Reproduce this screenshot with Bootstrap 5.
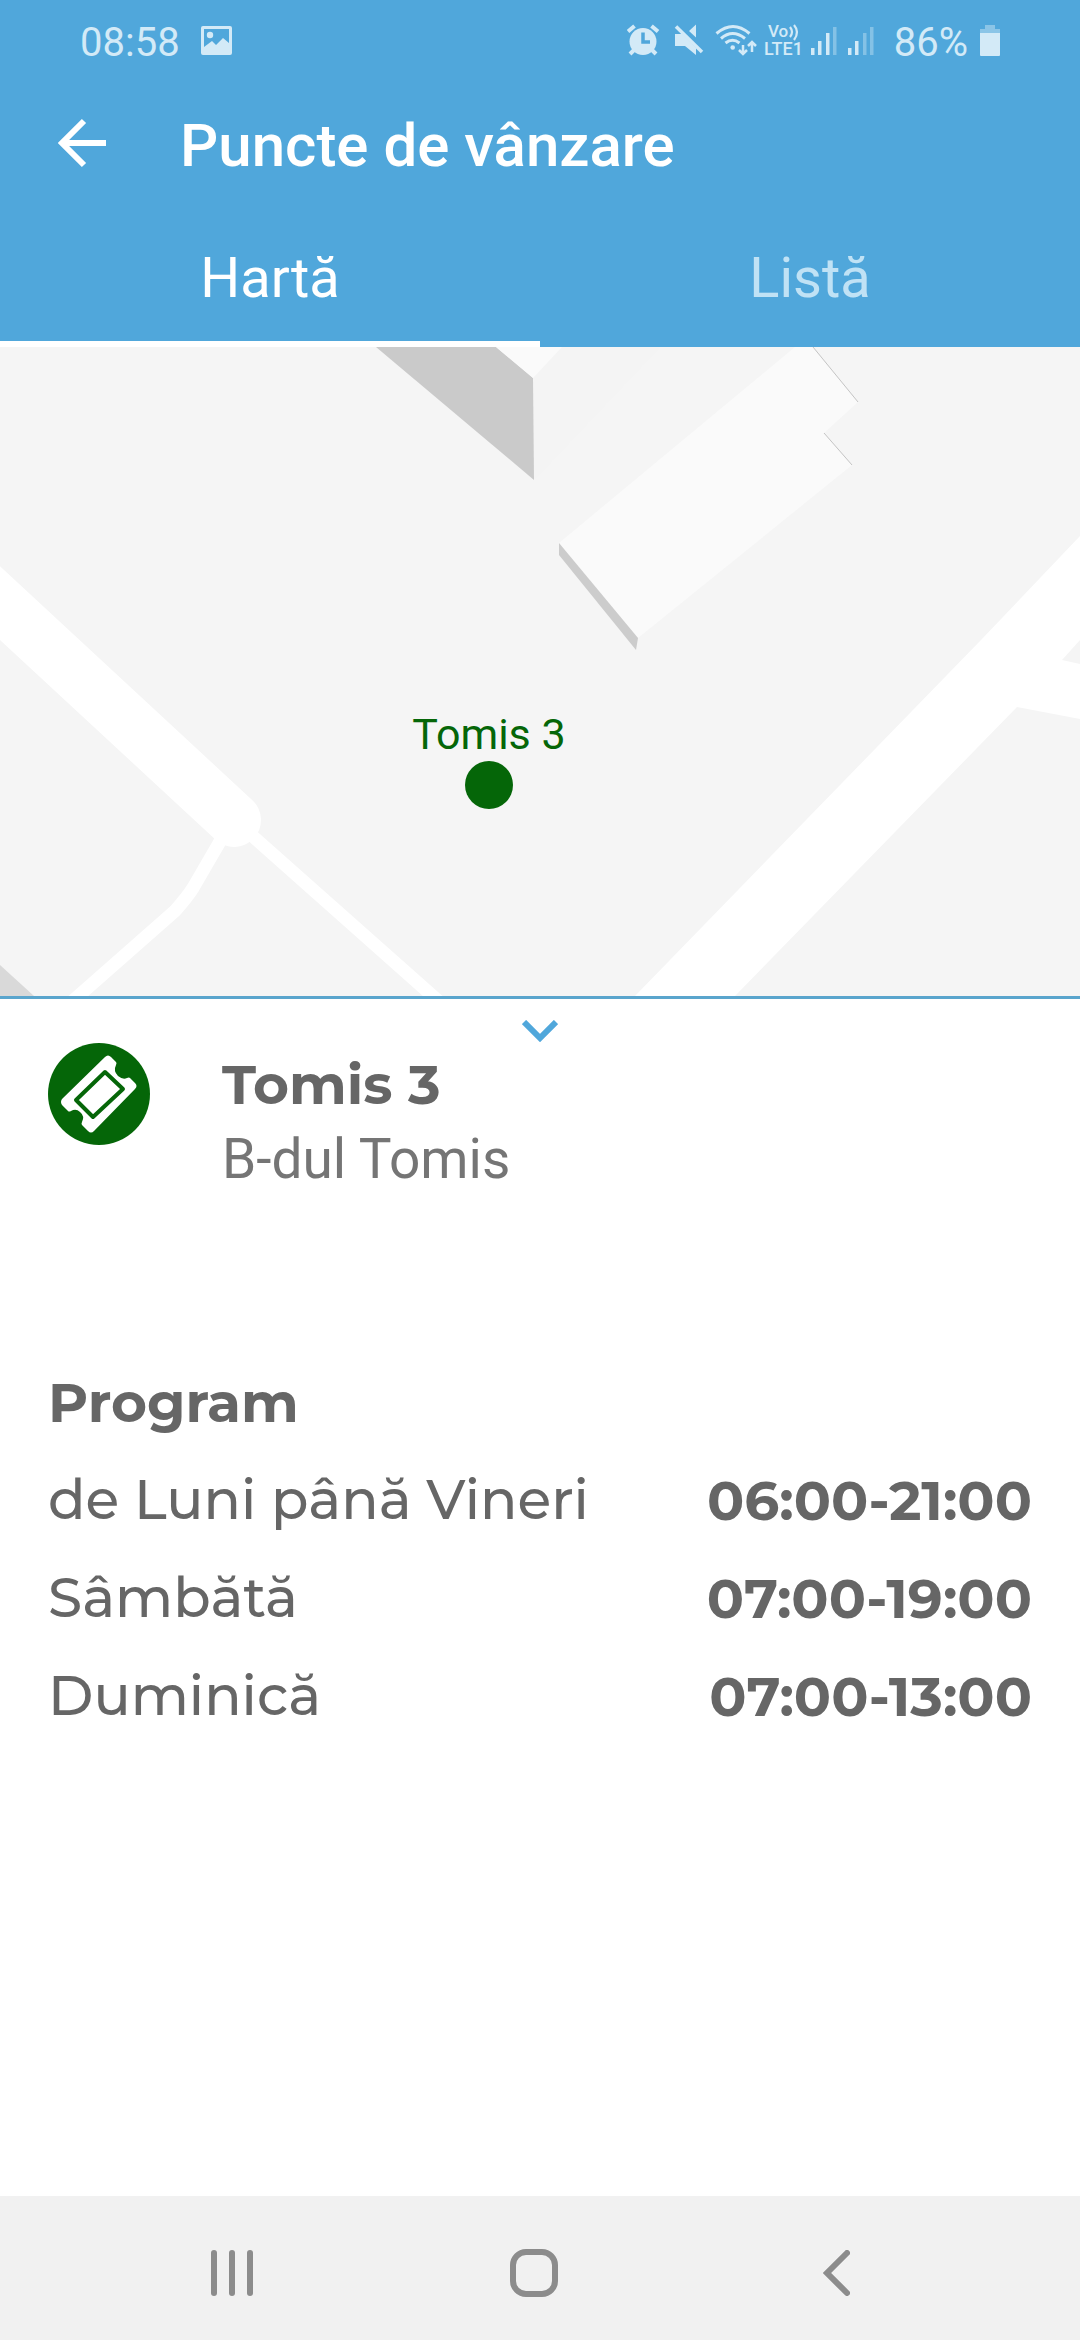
<!DOCTYPE html>
<html lang="ro">
<head>
<meta charset="utf-8">
<meta name="viewport" content="width=device-width, initial-scale=1">
<title>Puncte de vânzare</title>
<link href="https://cdn.jsdelivr.net/npm/bootstrap@5.3.0/dist/css/bootstrap.min.css" rel="stylesheet">
<style>
  body { font-family: Roboto, sans-serif; background: #fff; color: #666; }
  svg { display: block; flex: none; }
  .app-head { background: #50a7db; color: #fff; }
  .status { height: 86px; padding: 0 80px; font-size: 40px; color: #d3eaf7; }
  .status .clock { margin-right: 21px; }
  .status svg, .toolbar svg { margin-bottom: 6px; }
  .toolbar { height: 129px; padding: 0 56px 9px; }
  .toolbar h1 { font-size: 60px; line-height: 72px; font-weight: 500; margin-left: 72px; }
  .tabs .nav-link { height: 132px; padding: 0; border: 0; border-bottom: 6px solid transparent; border-radius: 0; background: none; font-size: 56px; line-height: 126px; color: #c0e2f5; }
  .tabs .nav-link.active { color: #fff; border-bottom-color: #fff; }
  .map { border-bottom: 3px solid #5aa5cd; background: #f5f5f5; }
  .map svg { width: 100%; height: auto; }
  .collapse-btn { padding: 21px 24px 1px; }
  .sheet { padding: 0 48px; }
  .sheet h2, .sheet h3, .hours { font-family: Montserrat, Inter, sans-serif; font-size: 55px; color: #666; }
  .sheet h2, .sheet h3 { font-weight: 700; }
  .place { gap: 72px; }
  .place h2, .place p { line-height: 74px; }
  .place p { font-size: 55px; color: #757575; }
  .place-text { padding-top: 5px; }
  .sheet h3 { margin-top: 158px; line-height: 97px; }
  .hours th, .hours td { height: 98px; line-height: 97px; padding: 0; vertical-align: top; font-weight: 500; }
  .hours td { padding-top: 2px; line-height: 96px; font-weight: 700; }
  .sysbar { height: 144px; padding: 0 93px 0 81px; background: #f1f1f1; }
</style>
</head>
<body class="min-vh-100 d-flex flex-column">
<header class="app-head">
  <div class="status d-flex align-items-center">
    <span class="clock">08:58</span>
    <svg width="31" height="29" viewBox="0 0 31 29"><path fill="#d3eaf7" fill-rule="evenodd" d="M2 0h27a2 2 0 0 1 2 2v25a2 2 0 0 1-2 2H2a2 2 0 0 1-2-2V2a2 2 0 0 1 2-2zM3 3v18l8-6 4 4 7-7 6 5V3z"/><circle cx="9" cy="9" r="3.2" fill="#d3eaf7"/></svg>
    <svg class="ms-auto" width="263" height="44" viewBox="26 18 263 44" fill="#d3eaf7" stroke="#d3eaf7" stroke-width="0">
      <circle cx="42" cy="41.500" r="13.500"/>
      <path fill="none" stroke-width="4" d="M27 31.500l6.500-5.500M50.500 26l6.500 5.500M33 50l-4 4M51 50l4 4"/>
      <path fill="none" stroke="#50a7db" stroke-width="3.500" d="M42 32.500v9.500h7"/>
      <path d="M74 34h7l14 14v7l-11-9H74zM88 31l7-6.500V37.500z"/>
      <path fill="none" stroke-width="3.500" d="M75 26.500l26 25.500"/>
      <path fill="none" stroke-width="3" d="M115.500 33.500q16.500-14 33 0M120 38.500q11.500-10 24 0M124.500 43q7-5.500 14 0"/>
      <circle cx="131.700" cy="47.500" r="2.300"/>
      <path fill="none" stroke-width="2.500" d="M142 45v8M138 50l4 4 4-4M151 52v-9M147 46l4-4 4 4"/>
      <g stroke="none" font-family="Roboto" font-weight="500"><text x="167" y="37" font-size="17">Vo</text><text x="163" y="55" font-size="18">LTE1</text></g>
      <path fill="none" stroke-width="2.200" d="M189 27q4 5 0 10M193 25q6 7 0 15"/>
      <path d="M210 48h3.500v7H210zM217 41h3.500v14H217zM225 33h3.500v22H225zM247 48h3.500v7H247zM254 41h3.500v14H254z"/>
      <path opacity=".4" d="M232 27h3.500v28H232zM262 33h3.500v22H262zM269 27h3.500v28H269z"/>
    </svg>
    <span class="ms-1">86%</span>
    <svg class="ms-2" width="24" height="33" viewBox="-4 0 24 33" fill="#d3eaf7"><path opacity=".45" d="M5 1h10v4h5v4H0V5h5z"/><path d="M0 9h20v22a1 1 0 0 1-1 1H1a1 1 0 0 1-1-1z"/></svg>
  </div>
  <div class="toolbar d-flex align-items-center">
    <button type="button" class="btn p-0 border-0" aria-label="Înapoi">
      <svg width="52" height="52" viewBox="0 0 52 52" fill="none" stroke="#fff" stroke-width="6"><path d="M50 26H6M28 4L6 26l22 22"/></svg>
    </button>
    <h1 class="mb-0">Puncte de vânzare</h1>
  </div>
  <div class="tabs nav nav-justified" role="tablist">
    <button type="button" class="nav-link active" role="tab" aria-selected="true">Hartă</button>
    <button type="button" class="nav-link" role="tab" aria-selected="false">Listă</button>
  </div>
</header>
<main class="flex-grow-1">
  <section class="map">
    <svg viewBox="0 347 1080 649">
      <path fill="#f4f4f4" d="M562 347h98L534 480l-1-102z"/>
      <path fill="#cacaca" d="M376 347h120l37 31 1 102z"/>
      <path fill="#fafafa" d="M496 347h66l-29 31z"/>
      <path fill="#fafafa" d="M795 347h18l45 55-34 31 28 32-214 173-79-95z"/>
      <path fill="#ccc" d="M559 543v12l77 95 2-12z"/>
      <path fill="none" stroke="#c4c4c4" d="M813 347l45 55M824 433l28 32"/>
      <path fill="#fff" d="M1080 536l-99 104-346 356h100l282-289 63 12v-55l-18-4 18-20z"/>
      <g fill="none" stroke="#fff">
        <path stroke-width="54" stroke-linecap="round" d="M-40 566L234 820"/>
        <path stroke-width="13" d="M222 838l-29 50q-5 8-18 23l-108 95M248 832l196 174"/>
      </g>
      <path fill="#d9d9d9" d="M0 965l34 31H0z"/>
      <circle cx="489" cy="785" r="24" fill="#056608"/>
      <text x="489" y="749" text-anchor="middle" font-family="Roboto" font-size="43" fill="#056608">Tomis 3</text>
    </svg>
  </section>
  <div class="text-center d-flex justify-content-center">
    <button type="button" class="collapse-btn btn border-0" aria-label="Restrânge">
      <svg width="36" height="22" viewBox="0 0 36 22" fill="none" stroke="#50a7db" stroke-width="6"><path d="M2 2l16 16L34 2"/></svg>
    </button>
  </div>
  <section class="sheet">
    <div class="place d-flex align-items-start">
      <svg width="102" height="102" viewBox="0 0 102 102"><circle cx="51" cy="51" r="51" fill="#056608"/>
        <path fill="#fff" d="M57 14q3-3 6 0l5 5q1 1 0 3-3 6 2 11 5 4 9 2 2-1 3 0l5 5q3 3 0 6L46 88q-3 3-6 0l-6-6q-1-1 0-3 3-6-2-10-4-4-9-1-2 1-3 0l-6-6q-2-3 0-6z"/>
        <path fill="none" stroke="#056608" stroke-width="4" stroke-linejoin="round" d="M57 29l18 17-30 28-17-17z"/></svg>
      <div class="place-text">
        <h2 class="mb-0">Tomis 3</h2>
        <p class="mb-0">B-dul Tomis</p>
      </div>
    </div>
    <h3 class="mb-0">Program</h3>
    <table class="hours w-100">
      <tbody>
        <tr><th scope="row">de Luni până Vineri</th><td class="text-end">06:00-21:00</td></tr>
        <tr><th scope="row">Sâmbătă</th><td class="text-end">07:00-19:00</td></tr>
        <tr><th scope="row">Duminică</th><td class="text-end">07:00-13:00</td></tr>
      </tbody>
    </table>
  </section>
</main>
<nav class="sysbar d-flex" aria-label="Sistem">
  <button type="button" class="btn border-0 d-flex justify-content-center align-items-center w-100 pt-3" aria-label="Recente"><svg width="42" height="46" viewBox="0 0 42 46" fill="#8c8c8c"><rect width="6" height="46" rx="3"/><rect x="18" width="6" height="46" rx="3"/><rect x="36" width="6" height="46" rx="3"/></svg></button>
  <button type="button" class="btn border-0 d-flex justify-content-center align-items-center w-100 pt-3" aria-label="Acasă"><svg width="48" height="48" viewBox="0 0 48 48" fill="none" stroke="#8c8c8c" stroke-width="6"><rect x="3" y="3" width="42" height="42" rx="13"/></svg></button>
  <button type="button" class="btn border-0 d-flex justify-content-center align-items-center w-100 pt-3" aria-label="Înapoi"><svg width="27" height="46" viewBox="0 0 27 46" fill="none" stroke="#8c8c8c" stroke-width="6" stroke-linecap="round" stroke-linejoin="miter"><path d="M24 3L4 23l20 20"/></svg></button>
</nav>
<script src="https://cdn.jsdelivr.net/npm/bootstrap@5.3.0/dist/js/bootstrap.bundle.min.js"></script>
</body>
</html>
